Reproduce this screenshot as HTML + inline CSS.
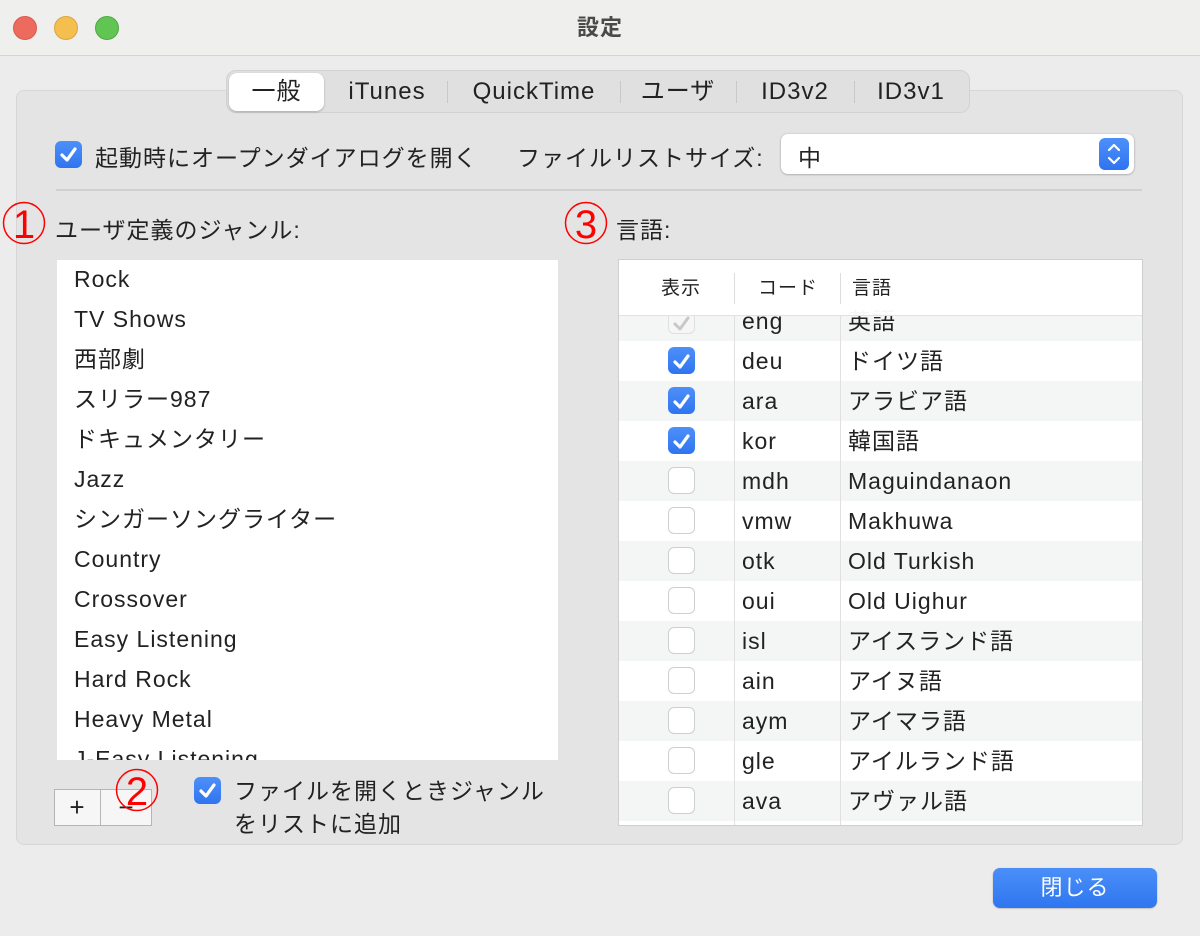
<!DOCTYPE html>
<html><head><meta charset="utf-8"><style>
*{box-sizing:border-box;margin:0;padding:0}
body{width:1200px;height:936px;background:#ececec;font-family:"Liberation Sans","Noto Sans CJK JP",sans-serif;color:#222;position:relative;overflow:hidden;font-size:23px;letter-spacing:1px}
.abs{position:absolute}
.title{left:0;top:0;width:1200px;height:56px;background:#efefee;border-bottom:1px solid #d4d4d4}
.dot{width:24px;height:24px;border-radius:50%;top:16px}
.group{left:16px;top:90px;width:1167px;height:755px;background:#e4e4e4;border:1px solid #d6d6d6;border-radius:8px}
.seg{left:226px;top:70px;width:744px;height:43px;background:#e0e0e0;border:1px solid #d2d2d2;border-radius:10px}
.tab{top:0;height:42px;line-height:41px;text-align:center;font-size:24px}
.sep{top:10px;width:1px;height:22px;background:#c8c8c8}
.cb{width:27px;height:27px;border-radius:6px;background:linear-gradient(#4d90fa,#2f74ef)}
.cbe{width:27px;height:27px;border-radius:6px;background:#fff;border:1px solid #cfcfcf}
.list{left:57px;top:260px;width:501px;height:500px;background:#fff;overflow:hidden}
.list div{height:40px;line-height:39px;padding-left:17px;font-size:23px}
.tbl{left:618px;top:259px;width:525px;height:567px;background:#fff;border:1px solid #cfcfcf;overflow:hidden}
.row{position:absolute;left:0;width:523px;height:40px;font-size:23px;line-height:40px}
.row.g{background:#f4f5f5}
.row .c{position:absolute;left:123px}.row .l{position:absolute;left:229px}
.row .k{position:absolute;left:49px;top:6px}
.num{position:absolute;letter-spacing:0}
</style></head><body>
<div class="abs title"></div>
<div class="abs dot" style="left:13px;background:#ed6a5e;border:1px solid #d65a50"></div>
<div class="abs dot" style="left:54px;background:#f5bf4f;border:1px solid #d9a43e"></div>
<div class="abs dot" style="left:95px;background:#61c554;border:1px solid #4ea943"></div>
<div class="abs" style="left:0;width:1200px;top:10px;text-align:center;font-size:22px;font-weight:bold;color:#4a4a4a">設定</div>
<div class="abs group"></div>
<div class="abs seg">
<div class="abs tab" style="left:2px;top:2px;height:38px;line-height:38px;width:95px;background:#fff;border-radius:8px;box-shadow:0 1px 2px rgba(0,0,0,.25)">一般</div>
<div class="abs tab" style="left:100px;width:120px">iTunes</div>
<div class="abs sep" style="left:220px"></div>
<div class="abs tab" style="left:221px;width:172px">QuickTime</div>
<div class="abs sep" style="left:393px"></div>
<div class="abs tab" style="left:393px;width:116px">ユーザ</div>
<div class="abs sep" style="left:509px"></div>
<div class="abs tab" style="left:509px;width:118px">ID3v2</div>
<div class="abs sep" style="left:627px"></div>
<div class="abs tab" style="left:627px;width:114px">ID3v1</div>
</div>
<div class="abs cb" style="left:55px;top:141px"><svg width="27" height="27"><path d="M7 14l5 5 8-11" stroke="#fff" stroke-width="3.2" fill="none" stroke-linecap="round" stroke-linejoin="round"/></svg></div>
<div class="abs" style="left:95px;top:139px">起動時にオープンダイアログを開く</div>
<div class="abs" style="left:517px;top:139px">ファイルリストサイズ:</div>
<div class="abs" style="left:781px;top:134px;width:353px;height:40px;background:#fff;border-radius:7px;box-shadow:0 0.5px 2px rgba(0,0,0,.35)">
<div class="abs" style="left:17px;top:5px">中</div>
<div class="abs" style="left:318px;top:4px;width:30px;height:32px;border-radius:6px;background:linear-gradient(#4d90fa,#2f74ef)"><svg width="30" height="32"><path d="M10 12l5-5 5 5M10 20l5 5 5-5" stroke="#fff" stroke-width="2.2" fill="none" stroke-linecap="round" stroke-linejoin="round"/></svg></div>
</div>
<div class="abs" style="left:56px;top:189px;width:1086px;height:2px;background:#d0d0d0"></div>
<svg class="num" style="left:2px;top:201px" width="46" height="46"><circle cx="22" cy="22" r="20.5" fill="none" stroke="#f00" stroke-width="1.5"/><text x="22" y="37" text-anchor="middle" font-size="40" fill="#f00" font-family="Liberation Sans">1</text></svg>
<div class="abs" style="left:55px;top:211px">ユーザ定義のジャンル:</div>
<svg class="num" style="left:564px;top:201px" width="46" height="46"><circle cx="22" cy="22" r="20.5" fill="none" stroke="#f00" stroke-width="1.5"/><text x="22" y="37" text-anchor="middle" font-size="40" fill="#f00" font-family="Liberation Sans">3</text></svg>
<div class="abs" style="left:616px;top:211px">言語:</div>
<div class="abs list">
<div>Rock</div><div>TV Shows</div><div>西部劇</div><div>スリラー987</div><div>ドキュメンタリー</div><div>Jazz</div><div>シンガーソングライター</div><div>Country</div><div>Crossover</div><div>Easy Listening</div><div>Hard Rock</div><div>Heavy Metal</div><div>J-Easy Listening</div>
</div>
<div class="abs" style="left:54px;top:789px;width:98px;height:37px;border:1px solid #b5b5b5;background:#f6f6f6"></div>
<div class="abs" style="left:100px;top:789px;width:1px;height:37px;background:#b5b5b5"></div>
<div class="abs" style="left:54px;top:789px;width:47px;text-align:center;font-size:26px;line-height:36px">+</div>
<div class="abs" style="left:101px;top:789px;width:51px;text-align:center;font-size:26px;line-height:36px">−</div>
<svg class="num" style="left:115px;top:768px" width="46" height="46"><circle cx="22" cy="22" r="20.5" fill="none" stroke="#f00" stroke-width="1.5"/><text x="22" y="37" text-anchor="middle" font-size="40" fill="#f00" font-family="Liberation Sans">2</text></svg>
<div class="abs cb" style="left:194px;top:777px"><svg width="27" height="27"><path d="M7 14l5 5 8-11" stroke="#fff" stroke-width="3.2" fill="none" stroke-linecap="round" stroke-linejoin="round"/></svg></div>
<div class="abs" style="left:234px;top:775px;line-height:33px">ファイルを開くときジャンル<br>をリストに追加</div>
<div class="abs tbl">
<div class="row g" style="top:41px"><span class="k cbe" style="background:#f6f6f6;border-color:#e0e0e0"><svg width="25" height="25"><path d="M6 13l5 5 8-11" stroke="#c8c8c8" stroke-width="3" fill="none" stroke-linecap="round" stroke-linejoin="round"/></svg></span><span class="c">eng</span><span class="l">英語</span></div>
<div class="row" style="top:81px"><span class="k cb"><svg width="27" height="27"><path d="M7 14l5 5 8-11" stroke="#fff" stroke-width="3.2" fill="none" stroke-linecap="round" stroke-linejoin="round"/></svg></span><span class="c">deu</span><span class="l">ドイツ語</span></div>
<div class="row g" style="top:121px"><span class="k cb"><svg width="27" height="27"><path d="M7 14l5 5 8-11" stroke="#fff" stroke-width="3.2" fill="none" stroke-linecap="round" stroke-linejoin="round"/></svg></span><span class="c">ara</span><span class="l">アラビア語</span></div>
<div class="row" style="top:161px"><span class="k cb"><svg width="27" height="27"><path d="M7 14l5 5 8-11" stroke="#fff" stroke-width="3.2" fill="none" stroke-linecap="round" stroke-linejoin="round"/></svg></span><span class="c">kor</span><span class="l">韓国語</span></div>
<div class="row g" style="top:201px"><span class="k cbe"></span><span class="c">mdh</span><span class="l">Maguindanaon</span></div>
<div class="row" style="top:241px"><span class="k cbe"></span><span class="c">vmw</span><span class="l">Makhuwa</span></div>
<div class="row g" style="top:281px"><span class="k cbe"></span><span class="c">otk</span><span class="l">Old Turkish</span></div>
<div class="row" style="top:321px"><span class="k cbe"></span><span class="c">oui</span><span class="l">Old Uighur</span></div>
<div class="row g" style="top:361px"><span class="k cbe"></span><span class="c">isl</span><span class="l">アイスランド語</span></div>
<div class="row" style="top:401px"><span class="k cbe"></span><span class="c">ain</span><span class="l">アイヌ語</span></div>
<div class="row g" style="top:441px"><span class="k cbe"></span><span class="c">aym</span><span class="l">アイマラ語</span></div>
<div class="row" style="top:481px"><span class="k cbe"></span><span class="c">gle</span><span class="l">アイルランド語</span></div>
<div class="row g" style="top:521px"><span class="k cbe"></span><span class="c">ava</span><span class="l">アヴァル語</span></div>
<div class="abs" style="left:0;top:0;width:523px;height:56px;background:rgba(255,255,255,.96);border-bottom:1px solid #e2e2e2;font-size:19px;line-height:58px">
<span class="abs" style="left:42px">表示</span><span class="abs" style="left:139px">コード</span><span class="abs" style="left:233px">言語</span>
<div class="abs" style="left:115px;top:13px;width:1px;height:31px;background:#ddd"></div>
<div class="abs" style="left:221px;top:13px;width:1px;height:31px;background:#ddd"></div>
</div>
<div class="abs" style="left:115px;top:56px;width:1px;height:520px;background:#e0e0e0"></div>
<div class="abs" style="left:221px;top:56px;width:1px;height:520px;background:#e0e0e0"></div>
</div>
<div class="abs" style="left:993px;top:868px;width:164px;height:40px;border-radius:7px;background:linear-gradient(#4a8ff8,#2f76f0);color:#fff;text-align:center;line-height:39px;font-size:22px;box-shadow:0 .5px 1.5px rgba(0,0,0,.3)">閉じる</div>
</body></html>
